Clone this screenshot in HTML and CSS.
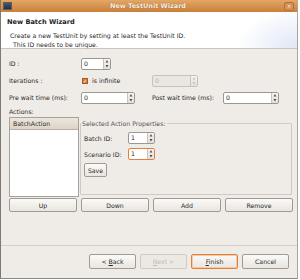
FILE: index.html
```html
<!DOCTYPE html>
<html lang="en">
<head>
  <meta charset="UTF-8" />
  <title>New TestUnit Wizard</title>
  <link rel="stylesheet" href="styles.css">
</head>
<body>
  <div class="window">
    <div class="titlebar">
      <span class="app-icon"></span>
      <span class="title">New TestUnit Wizard</span>
      <span class="close">&#x2715;</span>
    </div>

    <div class="header">
      <div class="h-title">New Batch Wizard</div>
      <div class="h-desc">Create a new TestUnit by setting at least the TestUnit ID.</div>
      <div class="h-desc indent">This ID needs to be unique.</div>
    </div>

    <div class="content">
      <div class="form">
        <label>ID :</label>
        <div class="spin w30"><span class="val">0</span><span class="arrows"><i>&#9650;</i><i>&#9660;</i></span></div>
        <span></span><span></span>

        <label>Iterations :</label>
        <div class="check"><span class="box">&#10003;</span>is infinite</div>
        <div class="spin w46 disabled"><span class="val">0</span><span class="arrows"><i>&#9650;</i><i>&#9660;</i></span></div>
        <span></span>

        <label>Pre wait time (ms):</label>
        <div class="spin w54"><span class="val">0</span><span class="arrows"><i>&#9650;</i><i>&#9660;</i></span></div>
        <label>Post wait time (ms):</label>
        <div class="spin w56"><span class="val">0</span><span class="arrows"><i>&#9650;</i><i>&#9660;</i></span></div>
      </div>

      <div class="actions-label">Actions:</div>
      <div class="middle">
        <div class="list">
          <div class="list-head">BatchAction</div>
        </div>
        <fieldset class="group">
          <legend>Selected Action Properties:</legend>
          <div class="prop">
            <label>Batch ID:</label>
            <div class="spin w26"><span class="val">1</span><span class="arrows"><i>&#9650;</i><i>&#9660;</i></span></div>
          </div>
          <div class="prop">
            <label>Scenario ID:</label>
            <div class="spin w26 focus"><span class="val">1</span><span class="arrows"><i>&#9650;</i><i>&#9660;</i></span></div>
          </div>
          <button class="btn save">Save</button>
        </fieldset>
      </div>

      <div class="row-btns">
        <button class="btn">Up</button>
        <button class="btn">Down</button>
        <button class="btn">Add</button>
        <button class="btn">Remove</button>
      </div>
    </div>

    <div class="footer">
      <button class="btn">&lt; <u>B</u>ack</button>
      <button class="btn" disabled><u>N</u>ext &gt;</button>
      <button class="btn default"><u>F</u>inish</button>
      <button class="btn">Cancel</button>
    </div>
  </div>
</body>
</html>
```

FILE: styles.css
```css
body { margin: 0; background: #fff; font-family: "DejaVu Sans", sans-serif; font-size: 6.2px; color: #2a2a2a; }
.window { width: 298px; height: 279px; box-sizing: border-box; background: #efebe7; border-left: 1px solid #7d7a76; border-right: 1px solid #a9a49e; border-bottom: 1px solid #8a8680; display: flex; flex-direction: column; }

.titlebar { height: 12px; background: linear-gradient(#e4a765, #c97f3a); display: flex; align-items: center; padding: 0 2px; }
.app-icon { width: 9px; height: 8px; background: linear-gradient(#445a80, #1e2d4c); border: 1px solid #6e5a40; box-sizing: border-box; }
.title { flex: 1; text-align: center; color: #fbf3ea; font-weight: bold; font-size: 6.5px; text-shadow: 0 0 1px #7a4a18; }
.close { width: 10px; height: 9px; box-sizing: border-box; border: 1px solid #b27236; border-radius: 2px; background: #d69252; color: #fbefe0; font-size: 5px; display: flex; align-items: center; justify-content: center; margin-right: 1px; }

.header { height: 37px; background: radial-gradient(ellipse 60px 40px at 100% 100%, #dfe6f5, #fff 100%); border-bottom: 1px solid #c9c5bf; padding: 6px 0 0 6px; box-sizing: border-box; }
.h-title { font-weight: bold; font-size: 6.6px; color: #1e1e1e; margin-bottom: 5px; }
.h-desc { padding-left: 3px; line-height: 9px; }
.h-desc.indent { padding-left: 6px; }

.content { padding: 6px 0 0 8px; }
.form { display: grid; grid-template-columns: 72px 71px 71px 68px; grid-auto-rows: 17px; align-items: center; }
.form label { white-space: nowrap; }

.spin { height: 12px; box-sizing: border-box; border: 1px solid #9c9890; border-radius: 2px; background: #fff; display: flex; align-items: stretch; }
.spin .val { flex: 1; padding-left: 2px; line-height: 10px; }
.spin .arrows { width: 6px; border-left: 1px solid #c8c4bc; background: linear-gradient(#f6f4f1, #e2ded8); display: flex; flex-direction: column; }
.spin .arrows i { flex: 1; font-style: normal; font-size: 3px; line-height: 5px; text-align: center; color: #333; }
.spin.disabled { background: #eae6e1; border-color: #c6c2bb; color: #b8b4ae; }
.spin.disabled .arrows i { color: #c0bcb5; }
.spin.focus { border-color: #e0803a; }
.w30 { width: 30px; }
.w46 { width: 46px; }
.w54 { width: 54px; }
.w56 { width: 56px; }
.w26 { width: 27px; }

.check { display: flex; align-items: center; }
.check .box { width: 6px; height: 6px; box-sizing: border-box; background: #e07a2e; border: 1px solid #a85a1e; color: #fff; font-size: 5px; line-height: 5px; text-align: center; margin: 0 4px 0 1px; }

.actions-label { margin-top: 2px; }
.middle { display: flex; margin-top: 2px; height: 80px; }
.list { width: 70px; box-sizing: border-box; border: 1px solid #a6a29b; background: #fff; }
.list-head { height: 11px; line-height: 11px; padding-left: 3px; background: linear-gradient(#ece6dd, #ddd4c7); border-bottom: 1px solid #b9b0a2; }
.group { margin: 3px 0 2px 1px; padding: 3px 3px 0 3px; width: 212px; box-sizing: border-box; border: 1px solid #cfcac3; border-radius: 1px; }
.group legend { padding: 0 1px; margin-left: -3px; color: #555; }
.prop { display: flex; align-items: center; height: 16px; }
.prop label { width: 44px; }
.save { width: 23px; height: 15px; margin-top: 1px; }

.btn { font-family: "DejaVu Sans", sans-serif; font-size: 6.2px; color: #2a2a2a; height: 14px; padding: 0; box-sizing: border-box; border: 1px solid #9f9b94; border-radius: 2px; background: linear-gradient(#fbfaf8, #e9e5df); }
.btn[disabled] { color: #c0bcb6; border-color: #cfcbc5; background: #ece8e3; }
.btn.default { border-color: #e0803a; box-shadow: inset 0 0 0 1px #f3c9a6; }
.row-btns { display: grid; grid-template-columns: repeat(4, 68px); column-gap: 4px; margin-top: 1px; }

.footer { margin-top: auto; border-top: 1px solid #d3cec7; display: flex; justify-content: flex-end; gap: 4px; padding: 8px 8px 9px 0; }
.footer .btn { width: 47px; height: 15px; }
```
